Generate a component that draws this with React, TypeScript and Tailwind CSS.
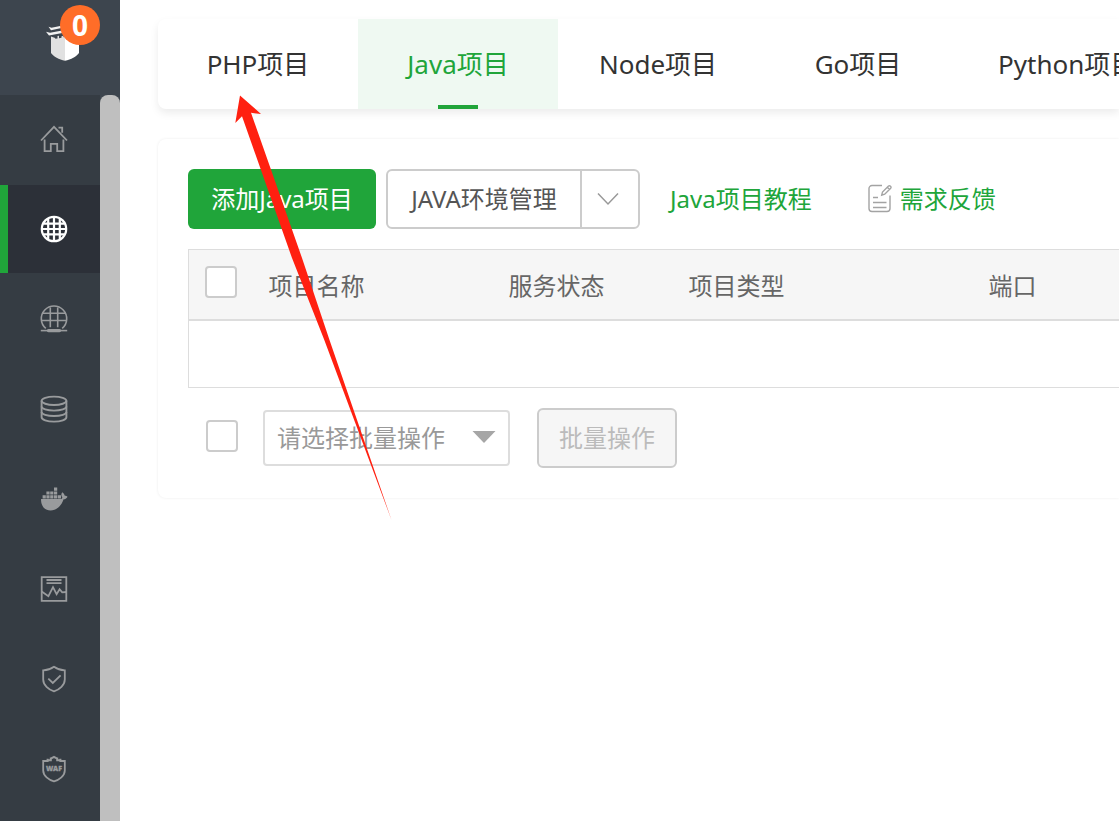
import React, { useState } from 'react';

const HomeIcon = () => (
  <svg width="28" height="28" viewBox="0 0 28 28" fill="none" stroke="currentColor" strokeWidth="1.8">
    <path d="M1 15.5 14 1.8 27 15.5" />
    <path d="M18.5 2.6h3.7v5.2" />
    <path d="M4.6 14.5v11.7h6.2v-7.4h6.4v7.4h6.2V14.5" />
  </svg>
);

const SiteIcon = () => (
  <svg width="28" height="28" viewBox="0 0 28 28" fill="none" stroke="currentColor" strokeWidth="2.2">
    <circle cx="14" cy="14" r="12.2" />
    <path d="M8.2 3.5v21M14 2v24M19.8 3.5v21M3.5 8.6h21M2 14h24M3.5 19.4h21" />
  </svg>
);

const FtpIcon = () => (
  <svg width="28" height="28" viewBox="0 0 28 28" fill="none" stroke="currentColor" strokeWidth="1.6">
    <path d="M5.8 23.4A12.7 12.7 0 1 1 22.2 23.4" />
    <path d="M10.3 2.6v19.6M17.7 2.6v19.6M3 8.2h22M2 15.5h24" />
    <path d="M.8 25.6h26.4" />
    <path d="M8.500 25.6h11" strokeWidth="3.4" strokeLinecap="round" />
  </svg>
);

const DatabaseIcon = () => (
  <svg width="28" height="28" viewBox="0 0 28 28" fill="none" stroke="currentColor" strokeWidth="1.9">
    <ellipse cx="14" cy="5.8" rx="12.4" ry="4.2" />
    <path d="M1.6 5.8v16.4c0 2.4 5.4 4.4 12.4 4.4s12.4-2 12.4-4.4V5.8" />
    <path d="M1.6 11.6c0 2.2 5.4 4 12.4 4s12.4-1.8 12.4-4M1.6 17c0 2.2 5.4 4 12.4 4s12.4-1.8 12.4-4" />
  </svg>
);

const DockerIcon = () => (
  <svg width="28" height="28" viewBox="0 0 28 28" fill="currentColor">
    <path d="M1 14h19.500c1.200-.1 1.800-.7 1.800-1.600-1.300-1.700-1.200-3.600-.1-5.100 1.400.8 2.200 2 2.600 3.400 1.200 0 2 .3 2.700 1-.7 1.600-2 2.500-3.900 2.600-2.400 6.900-6.800 11.100-13.100 11.100C4.200 25.400 1 20.700 1 14z" />
    <path d="M2.600 10.200h3.200v3.200H2.600zM6.400 10.200h3.200v3.200H6.400zM10.200 10.200h3.200v3.200h-3.200zM14 10.200h3.200v3.200H14zM17.800 10.200h3.200v3.200h-3.200zM6.400 6.400h3.200v3.200H6.400zM10.200 6.400h3.200v3.200h-3.200zM14 6.400h3.200v3.200H14zM14 2.600h3.200v3.200H14z" />
  </svg>
);

const MonitorIcon = () => (
  <svg width="28" height="28" viewBox="0 0 28 28" fill="none" stroke="currentColor" strokeWidth="1.8">
    <path d="M1.7 2.2h24.600v23.600H1.7z" />
    <path d="M6.500 5h15M6.500 8.200h15" />
    <path d="M1.7 16.500 8.400 21.200 13 12.200 16.600 19.200 19.600 14.200 22.200 17.400 26.300 17" />
  </svg>
);

const ShieldIcon = () => (
  <svg width="28" height="28" viewBox="0 0 28 28" fill="none" stroke="currentColor" strokeWidth="1.8">
    <path d="M14 1.800C11 4 7 5.200 3.200 5.400v9.200c0 5.400 5.300 10.200 10.800 11.700 5.500-1.500 10.800-6.300 10.800-11.700V5.400C21 5.200 17 4 14 1.800z" />
    <path d="M8.300 13.700 12.800 18 20.600 10.400" />
  </svg>
);

const WafIcon = () => (
  <svg width="28" height="28" viewBox="0 0 28 28" fill="none" stroke="currentColor" strokeWidth="1.800">
    <path d="M3.200 5v10.600c0 5.200 5.500 9.300 10.800 10.800 5.300-1.500 10.800-5.600 10.800-10.800V5" />
    <path d="M3 6h4.600V3.700M7.300 5.200h3.500V2.600M10.800 3.600 14 1.800l3.200 1.800M17.200 2.600v2.600h3.500M20.400 3.700V6H25" strokeWidth="2" />
    <text x="14" y="16" textAnchor="middle" fontSize="7" fontWeight="900" fill="currentColor" stroke="currentColor" strokeWidth="0.3">WAF</text>
  </svg>
);

const LogoIcon = () => (
  <svg width="36" height="38" viewBox="0 0 36 38">
    <path d="M6 12.500l4.200 1.500v.8l2.300-.3V12l1.500-.3v2.500l2.500-.5v-1.500l2-.4v1.500l1.500-.3V36.800C14 35.500 8.500 32.500 6 29z" fill="#e1e1e1" />
    <path d="M20 10h14v19c-2.500 3.500-8 6.500-14 7.800z" fill="#fff" />
    <path d="M3.500 2.700 6.500 3.700 20 1v2.300L6 6.300zM1 7.800l4 .9L20 6v2.500L4 11.500z" fill="#f2f2f2" />
  </svg>
);

const FeedbackIcon = () => (
  <svg width="24" height="30" viewBox="0 0 24 30" fill="none" stroke="#a3a3a3" strokeWidth="1.400">
    <path d="M14 1.500H4a3 3 0 0 0-3 3v20a3 3 0 0 0 3 3h15a3 3 0 0 0 3-3V11.500" />
    <path d="M5 13.500h5M5 18.500h13.500M5 23.500h13.500" />
    <path d="M13.700 11.200l.8-3.200 6-6c1.400-1 3.200.8 2.200 2.200l-6 6zM19.300 3.300l2.200 2.200" />
  </svg>
);

const menu = [
  { name: 'home', icon: HomeIcon },
  { name: 'site', icon: SiteIcon },
  { name: 'ftp', icon: FtpIcon },
  { name: 'database', icon: DatabaseIcon },
  { name: 'docker', icon: DockerIcon },
  { name: 'monitor', icon: MonitorIcon },
  { name: 'security', icon: ShieldIcon },
  { name: 'waf', icon: WafIcon },
];

const tabs = ['PHP项目', 'Java项目', 'Node项目', 'Go项目', 'Python项目'];

const checkboxClass =
  'block w-8 h-8 shrink-0 appearance-none rounded border-2 border-[#cccccc] bg-white checked:bg-[#20a53a]';

const Sidebar: React.FC = () => {
  const [active, setActive] = useState('site');

  return (
    <aside className="w-[120px] shrink-0 flex flex-col bg-[#3d454e]">
      <div className="relative h-[95px] pt-6 pl-[45px]">
        <LogoIcon />
        <span className="absolute top-[5px] right-5 w-10 h-10 rounded-full bg-[#ff6d28] text-white text-[28px] leading-10 font-bold text-center">
          0
        </span>
      </div>
      <div className="flex flex-1">
        <nav className="flex flex-col flex-1 gap-0.5 bg-[#353c43]">
          {menu.map(({ name, icon: Icon }) => (
            <a
              key={name}
              href={`#${name}`}
              aria-label={name}
              onClick={() => setActive(name)}
              className={`h-[88px] flex items-center justify-center border-l-8 ${
                active === name
                  ? 'border-[#20a53a] bg-[#2c3038] text-white'
                  : 'border-transparent text-[#999b9d]'
              }`}
            >
              <Icon />
            </a>
          ))}
        </nav>
        <div className="w-5 rounded-t-lg bg-[#bfbfbf]"></div>
      </div>
    </aside>
  );
};

const ProjectTabs: React.FC = () => {
  const [current, setCurrent] = useState('Java项目');

  return (
    <nav className="flex rounded-l-lg bg-white shadow-[0_4px_8px_rgba(0,0,0,0.08)]">
      {tabs.map((tab) => (
        <button
          key={tab}
          onClick={() => setCurrent(tab)}
          className={`relative min-w-[200px] px-10 h-[90px] shrink-0 text-[26px] ${
            current === tab ? 'bg-[#eff9f2] text-[#20a53a]' : 'text-[#333333]'
          }`}
        >
          {tab}
          {current === tab && (
            <span className="absolute bottom-0 inset-x-0 mx-auto w-10 h-1 bg-[#20a53a]"></span>
          )}
        </button>
      ))}
    </nav>
  );
};

const Toolbar: React.FC = () => (
  <div className="flex items-center h-[60px] text-2xl">
    <button className="w-[188px] h-full shrink-0 rounded-md bg-[#20a53a] text-white">添加Java项目</button>
    <div className="ml-2.5 flex h-full shrink-0 rounded-md border-2 border-[#cccccc] bg-white text-[#555555]">
      <button className="w-48 border-r-2 border-[#cccccc] box-content">JAVA环境管理</button>
      <button aria-label="JAVA环境管理" className="w-14 pr-1 flex items-center justify-center">
        <svg width="22" height="14" viewBox="0 0 22 14" fill="none" stroke="#999999" strokeWidth="1.500">
          <path d="M1 1.500 11 12 21 1.500" />
        </svg>
      </button>
    </div>
    <a href="#tutorial" className="ml-[30px] shrink-0 text-[#20a53a]">Java项目教程</a>
    <a href="#feedback" className="ml-14 shrink-0 flex items-center gap-2 text-[#20a53a]">
      <FeedbackIcon />
      需求反馈
    </a>
  </div>
);

const ProjectTable: React.FC = () => (
  <table className="mt-5 w-full table-fixed border-collapse border border-r-0 border-[#dddddd] text-2xl text-[#666666]">
    <thead>
      <tr className="h-[70px] bg-[#f6f6f6] border-b-2 border-[#dddddd] text-left">
        <th className="w-16 pl-4 pb-1">
          <input type="checkbox" aria-label="全选" className={checkboxClass} />
        </th>
        <th className="w-[240px] px-4 pt-1 font-normal">项目名称</th>
        <th className="w-[180px] px-4 pt-1 font-normal">服务状态</th>
        <th className="w-[300px] px-4 pt-1 font-normal">项目类型</th>
        <th className="px-4 pt-1 font-normal">端口</th>
      </tr>
    </thead>
    <tbody>
      <tr className="h-[68px]">
        <td colSpan={5}></td>
      </tr>
    </tbody>
  </table>
);

const BatchBar: React.FC = () => (
  <div className="mt-5 pl-[18px] flex items-center text-2xl">
    <div className="pb-1">
      <input type="checkbox" aria-label="批量选择" className={checkboxClass} />
    </div>
    <div className="relative ml-[25px]">
      <select
        aria-label="批量操作"
        className="w-[247px] h-14 pl-3 appearance-none rounded border-2 border-[#dddddd] bg-white text-[#999999]"
      >
        <option>请选择批量操作</option>
      </select>
      <svg className="absolute top-5 right-3.5 pointer-events-none" width="24" height="14" viewBox="0 0 24 14">
        <path d="M.5 1h23L12 13z" fill="#a6a6a6" />
      </svg>
    </div>
    <button
      disabled
      className="ml-[27px] w-[140px] h-[60px] rounded-md border-2 border-[#cccccc] bg-[#f6f6f6] text-[#bbbbbb]"
    >
      批量操作
    </button>
  </div>
);

const App: React.FC = () => {
  return (
    <div className="relative flex min-h-screen overflow-hidden bg-white font-['Noto_Sans','Noto_Sans_CJK_SC',sans-serif]">
      <Sidebar />
      <main className="flex-1 min-w-0 pl-[38px] pt-[19px]">
        <ProjectTabs />
        <section className="mt-[30px] pl-[30px] pt-[30px] pb-[30px] rounded-l-lg bg-white shadow-[0_0_3px_rgba(0,0,0,0.08)]">
          <Toolbar />
          <ProjectTable />
          <BatchBar />
        </section>
      </main>

      {/* Pointer towards the PHP tab */}
      <svg
        className="absolute left-[230px] top-[90px] pointer-events-none"
        width="170"
        height="435"
        viewBox="230 90 170 435"
      >
        <path d="M240 95.500 235.300 123 242 116.300 292 258 324.300 340 391.500 520 329.500 340 302 258 251 112.800 261 114z" fill="#ff2010" />
      </svg>
    </div>
  );
};

export default App;
